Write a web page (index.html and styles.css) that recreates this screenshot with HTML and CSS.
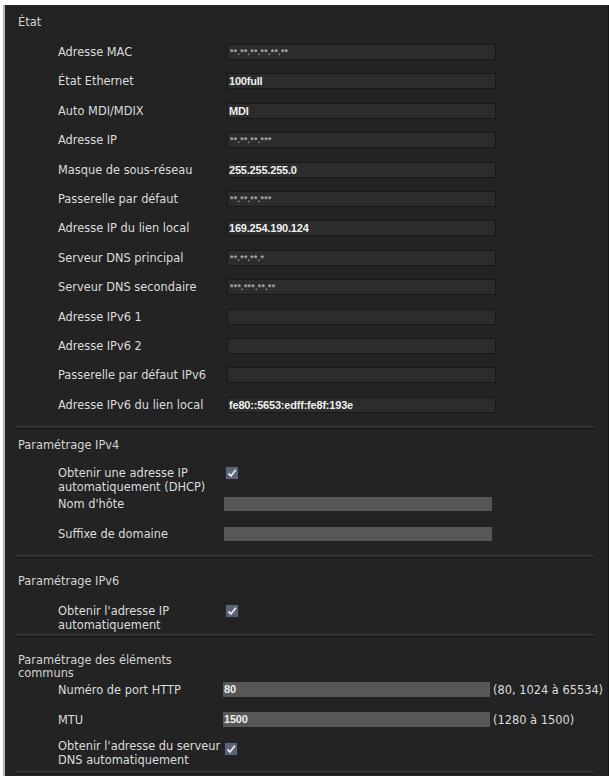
FILE: index.html
```html
<!DOCTYPE html>
<html lang="fr">
<head>
<meta charset="utf-8">
<title>Réseau</title>
<link rel="stylesheet" href="styles.css">
</head>
<body>
<div class="panel">
  <section class="sec sec-etat">
    <div class="title">État</div>
    <div class="rows">
      <div class="row"><span class="lbl">Adresse MAC</span><span class="ro mask">**.**.**.**.**.**</span></div>
      <div class="row"><span class="lbl">État Ethernet</span><span class="ro">100full</span></div>
      <div class="row"><span class="lbl">Auto MDI/MDIX</span><span class="ro">MDI</span></div>
      <div class="row"><span class="lbl">Adresse IP</span><span class="ro mask">**.**.**.***</span></div>
      <div class="row"><span class="lbl">Masque de sous-réseau</span><span class="ro">255.255.255.0</span></div>
      <div class="row"><span class="lbl">Passerelle par défaut</span><span class="ro mask">**.**.**.***</span></div>
      <div class="row"><span class="lbl">Adresse IP du lien local</span><span class="ro">169.254.190.124</span></div>
      <div class="row"><span class="lbl">Serveur DNS principal</span><span class="ro mask">**.**.**.*</span></div>
      <div class="row"><span class="lbl">Serveur DNS secondaire</span><span class="ro mask">***.***.**.**</span></div>
      <div class="row"><span class="lbl">Adresse IPv6 1</span><span class="ro"></span></div>
      <div class="row"><span class="lbl">Adresse IPv6 2</span><span class="ro"></span></div>
      <div class="row"><span class="lbl">Passerelle par défaut IPv6</span><span class="ro"></span></div>
      <div class="row"><span class="lbl">Adresse IPv6 du lien local</span><span class="ro">fe80::5653:edff:fe8f:193e</span></div>
    </div>
  </section>
  <div class="sep"></div>

  <section class="sec sec-v4">
    <div class="title">Paramétrage IPv4</div>
    <div class="row multi dhcp"><span class="lbl">Obtenir une adresse IP<br>automatiquement (DHCP)</span><span class="cb"><svg viewBox="0 0 12 12" width="12" height="12"><path d="M2.5 6.5 L5 9 L9.8 2.8" fill="none" stroke="#e8e8e8" stroke-width="1.8"/></svg></span></div>
    <div class="row short"><span class="lbl">Nom d'hôte</span><span class="ed"></span></div>
    <div class="row short gap"><span class="lbl">Suffixe de domaine</span><span class="ed"></span></div>
  </section>
  <div class="sep sep2"></div>

  <section class="sec sec-v6">
    <div class="title">Paramétrage IPv6</div>
    <div class="row multi v6"><span class="lbl">Obtenir l'adresse IP<br>automatiquement</span><span class="cb"><svg viewBox="0 0 12 12" width="12" height="12"><path d="M2.5 6.5 L5 9 L9.8 2.8" fill="none" stroke="#e8e8e8" stroke-width="1.8"/></svg></span></div>
  </section>
  <div class="sep sep3"></div>

  <section class="sec sec-com">
    <div class="title two">Paramétrage des éléments<br>communs</div>
    <div class="row short http"><span class="lbl narrow">Numéro de port HTTP</span><span class="ed ed2">80</span><span class="range">(80, 1024 à 65534)</span></div>
    <div class="row short gap"><span class="lbl narrow">MTU</span><span class="ed ed2">1500</span><span class="range">(1280 à 1500)</span></div>
    <div class="row multi dns"><span class="lbl">Obtenir l'adresse du serveur<br>DNS automatiquement</span><span class="cb cb-dns"><svg viewBox="0 0 12 12" width="12" height="12"><path d="M2.5 6.5 L5 9 L9.8 2.8" fill="none" stroke="#e8e8e8" stroke-width="1.8"/></svg></span></div>
  </section>
  <div class="sep sep4"></div>
</div>
</body>
</html>
```
FILE: styles.css
```css
html, body {
  margin: 0;
  padding: 0;
  background: #ffffff;
}
body {
  padding: 5px 0 0 3px;
  height: 776px;
  box-sizing: border-box;
  overflow: hidden;
}
.panel {
  background: #232323;
  border-left: 2px solid #b4b4b4;
  border-right: 1px solid #161616;
  height: 771px;
  box-sizing: border-box;
  font-family: "DejaVu Sans", Verdana, sans-serif;
  font-size: 11.4px;
  color: #dcdcdc;
  overflow: hidden;
}
.sec {
  display: flex;
  flex-direction: column;
}
.title {
  padding-left: 13px;
  line-height: 14px;
  height: 14px;
  color: #d4d4d4;
  white-space: nowrap;
}
.title.two {
  height: 27px;
  line-height: 13.5px;
}
.sec-etat .title { margin-top: 10px; }
.sec-etat .rows { margin-top: 8.3px; }
.row {
  display: flex;
  align-items: center;
  height: 29.4px;
  padding-left: 53px;
  white-space: nowrap;
}
.lbl {
  width: 169px;
  flex: none;
  line-height: 14px;
}
.sec-v4 .lbl, .sec-v6 .lbl, .sec-com .lbl { width: 166px; }
.sec-com .lbl.narrow { width: 165px; }
.ro {
  box-sizing: border-box;
  width: 269px;
  height: 16px;
  background: #2c2c2c;
  border: 1px solid #181818;
  font-family: "Liberation Sans", Arial, sans-serif;
  font-size: 11px;
  font-weight: bold;
  line-height: 14px;
  color: #f0f0f0;
  padding-left: 1px;
  letter-spacing: -0.2px;
}
.ro.mask {
  font-size: 8.5px;
  letter-spacing: 0.4px;
  color: #a8a8a8;
  padding-left: 2px;
}
.ed {
  box-sizing: border-box;
  width: 268px;
  height: 14px;
  background: #575757;
  font-family: "Liberation Sans", Arial, sans-serif;
  font-size: 11px;
  font-weight: bold;
  line-height: 14px;
  color: #eeeeee;
  padding-left: 1px;
  letter-spacing: -0.2px;
}
.ed2 {
  width: 267px;
  height: 15px;
}
.range {
  margin-left: 3px;
  color: #dcdcdc;
}
.sep {
  margin: 6.5px 0 0 11px;
  width: 578px;
  height: 1px;
  border-top: 1px solid #3a3a3a;
  border-bottom: 1px solid #161616;
  background: #2e2e2e;
}
.sec-v4 .title { margin-top: 9px; }
.row.multi {
  height: auto;
  align-items: flex-start;
}
.row.multi .lbl { line-height: 14px; }
.dhcp { margin-top: 14px; }
.row.short { height: 20px; }
.row.gap { margin-top: 10px; }
.cb {
  display: block;
  width: 12px;
  height: 12px;
  margin-top: 1px;
  margin-left: 2px;
  background: #5b6379;
  box-shadow: 0 0 1px #2f3a2f;
}
.cb svg { display: block; }
.sep2 { margin-top: 11px; }
.sec-v6 .title { margin-top: 16px; }
.v6 { margin-top: 16px; }
.v6 .lbl { line-height: 13px; }
.sep3 { margin-top: 2px; }
.sec-com .title { margin-top: 17px; }
.http { margin-top: -1px; }
.dns { margin-top: 9px; }
.dns .lbl { line-height: 14.5px; }
.cb-dns { margin-top: 4px; margin-left: 1px; }
.sep4 { margin-top: 4px; }
```
